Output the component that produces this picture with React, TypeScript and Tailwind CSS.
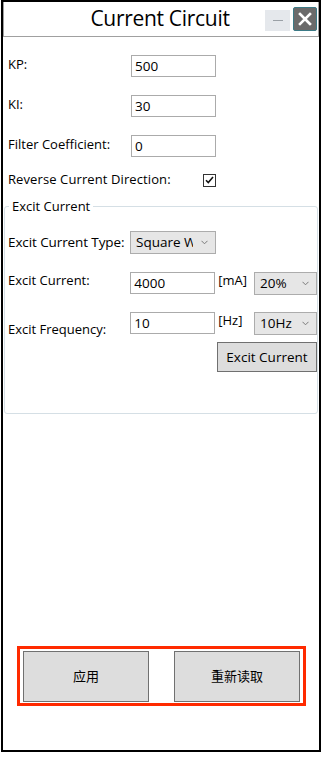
import React from "react";

const Chevron = () => (
  <svg width="7" height="5" viewBox="0 0 7 5" className="shrink-0">
    <path d="M0.5 0.8 L3.5 3.8 L6.5 0.8" fill="none" stroke="#7a7a7a" strokeWidth="1" />
  </svg>
);

const Input = ({ value, className = "" }: { value: string; className?: string }) => (
  <div className={`h-[22px] w-[85px] shrink-0 border border-[#ababab] bg-white pl-[3px] text-[13.5px] leading-[20px] text-black ${className}`}>
    {value}
  </div>
);

const Select = ({ value, className = "", textClass = "" }: { value: string; className?: string; textClass?: string }) => (
  <div className={`flex h-[23px] shrink-0 items-center justify-between border border-[#acacac] bg-[#e6e6e6] pl-[5px] pr-[7px] text-[13.5px] text-black ${className}`}>
    <span className={`overflow-hidden whitespace-nowrap ${textClass}`}>{value}</span>
    <Chevron />
  </div>
);

export default function App() {
  return (
    <div className="h-[757px] w-[323px] bg-white font-['Open_Sans','Noto_Sans',sans-serif] text-[13px] text-black">
      <div className="ml-px flex h-[752px] w-[320px] flex-col border-2 border-black">
        {/* Title bar */}
        <div className="relative flex h-[35px] items-center justify-center border-x border-b border-[#a0a0a0]">
          <span className="mr-[2px] text-[21px] tracking-[-0.3px]">Current Circuit</span>
          <div className="absolute right-[28px] top-[8px] flex h-[21px] w-[25px] items-center justify-center bg-[#e5e8ec]">
            <div className="h-px w-[10px] bg-[#9aa0a6]" />
          </div>
          <div className="absolute right-[1px] top-[5px] flex h-[24px] w-[24px] items-center justify-center rounded-[2px] border border-[#3c7a86] bg-[#6b6b6b]">
            <svg width="14" height="14" viewBox="0 0 14 14">
              <path d="M2 2 L12 12 M12 2 L2 12" stroke="white" strokeWidth="2.6" strokeLinecap="square" />
            </svg>
          </div>
        </div>

        {/* Fields */}
        <div className="flex flex-col pl-[5px] pt-[18px]">
          <div className="flex h-[22px] items-start">
            <span className="w-[123px] leading-[18px]">KP:</span>
            <Input value="500" />
          </div>
          <div className="mt-[18px] flex h-[22px] items-start">
            <span className="w-[123px] leading-[18px]">KI:</span>
            <Input value="30" />
          </div>
          <div className="mt-[18px] flex h-[22px] items-start">
            <span className="w-[123px] leading-[18px]">Filter Coefficient:</span>
            <Input value="0" />
          </div>
          <div className="mt-[13px] flex h-[20px] items-center">
            <span className="w-[195px] tracking-[0.1px]">Reverse Current Direction:</span>
            <div className="flex h-[13px] w-[13px] items-center justify-center border border-[#333] bg-white">
              <svg width="9" height="8" viewBox="0 0 9 8">
                <path d="M1 4.2 L3.3 6.5 L8 1" fill="none" stroke="#111" strokeWidth="1.6" />
              </svg>
            </div>
          </div>
        </div>

        {/* Group box */}
        <div className="relative ml-[1px] mr-[1px] mt-[16px] h-[208px] rounded-[3px] border border-[#d5dfe5]">
          <span className="absolute left-[4px] top-[-10px] bg-white px-[3px] leading-[18px]">Excit Current</span>
          <div className="flex flex-col pl-[3px] pt-[24px]">
            <div className="flex h-[23px] items-center">
              <span className="w-[122px] text-[13.5px] tracking-[-0.1px]">Excit Current Type:</span>
              <Select value="Square W" className="w-[86px]" textClass="w-[57px]" />
            </div>
            <div className="mt-[18px] flex h-[23px] items-start">
              <span className="w-[123px] leading-[16px]">Excit Current:</span>
              <Input value="4000" />
              <span className="ml-[3px] w-[36px] leading-[16px]">[mA]</span>
              <Select value="20%" className="w-[63px]" />
            </div>
            <div className="mt-[17px] flex h-[23px] items-start">
              <span className="w-[123px] pt-[8px]">Excit Frequency:</span>
              <Input value="10" className="leading-[16px]" />
              <span className="ml-[3px] w-[36px] leading-[16px]">[Hz]</span>
              <Select value="10Hz" className="w-[63px]" />
            </div>
            <div className="mt-[7px] flex justify-end">
              <div className="flex h-[30px] w-[100px] items-center justify-center border border-[#707070] bg-[#dddddd] text-[13.5px]">
                Excit Current
              </div>
            </div>
          </div>
        </div>

        <div className="flex-1" />

        {/* Bottom buttons */}
        <div className="mb-[44px] ml-[14px] flex h-[60px] w-[289px] items-center justify-between border-[3px] border-[#ff2a00] px-[3px] font-['Noto_Sans_CJK_SC','Noto_Sans',sans-serif] text-[13px]">
          <div className="flex h-[51px] w-[126px] items-center justify-center border border-[#707070] bg-[#dddddd]">应用</div>
          <div className="flex h-[51px] w-[126px] items-center justify-center border border-[#707070] bg-[#dddddd]">重新读取</div>
        </div>
      </div>
    </div>
  );
}
